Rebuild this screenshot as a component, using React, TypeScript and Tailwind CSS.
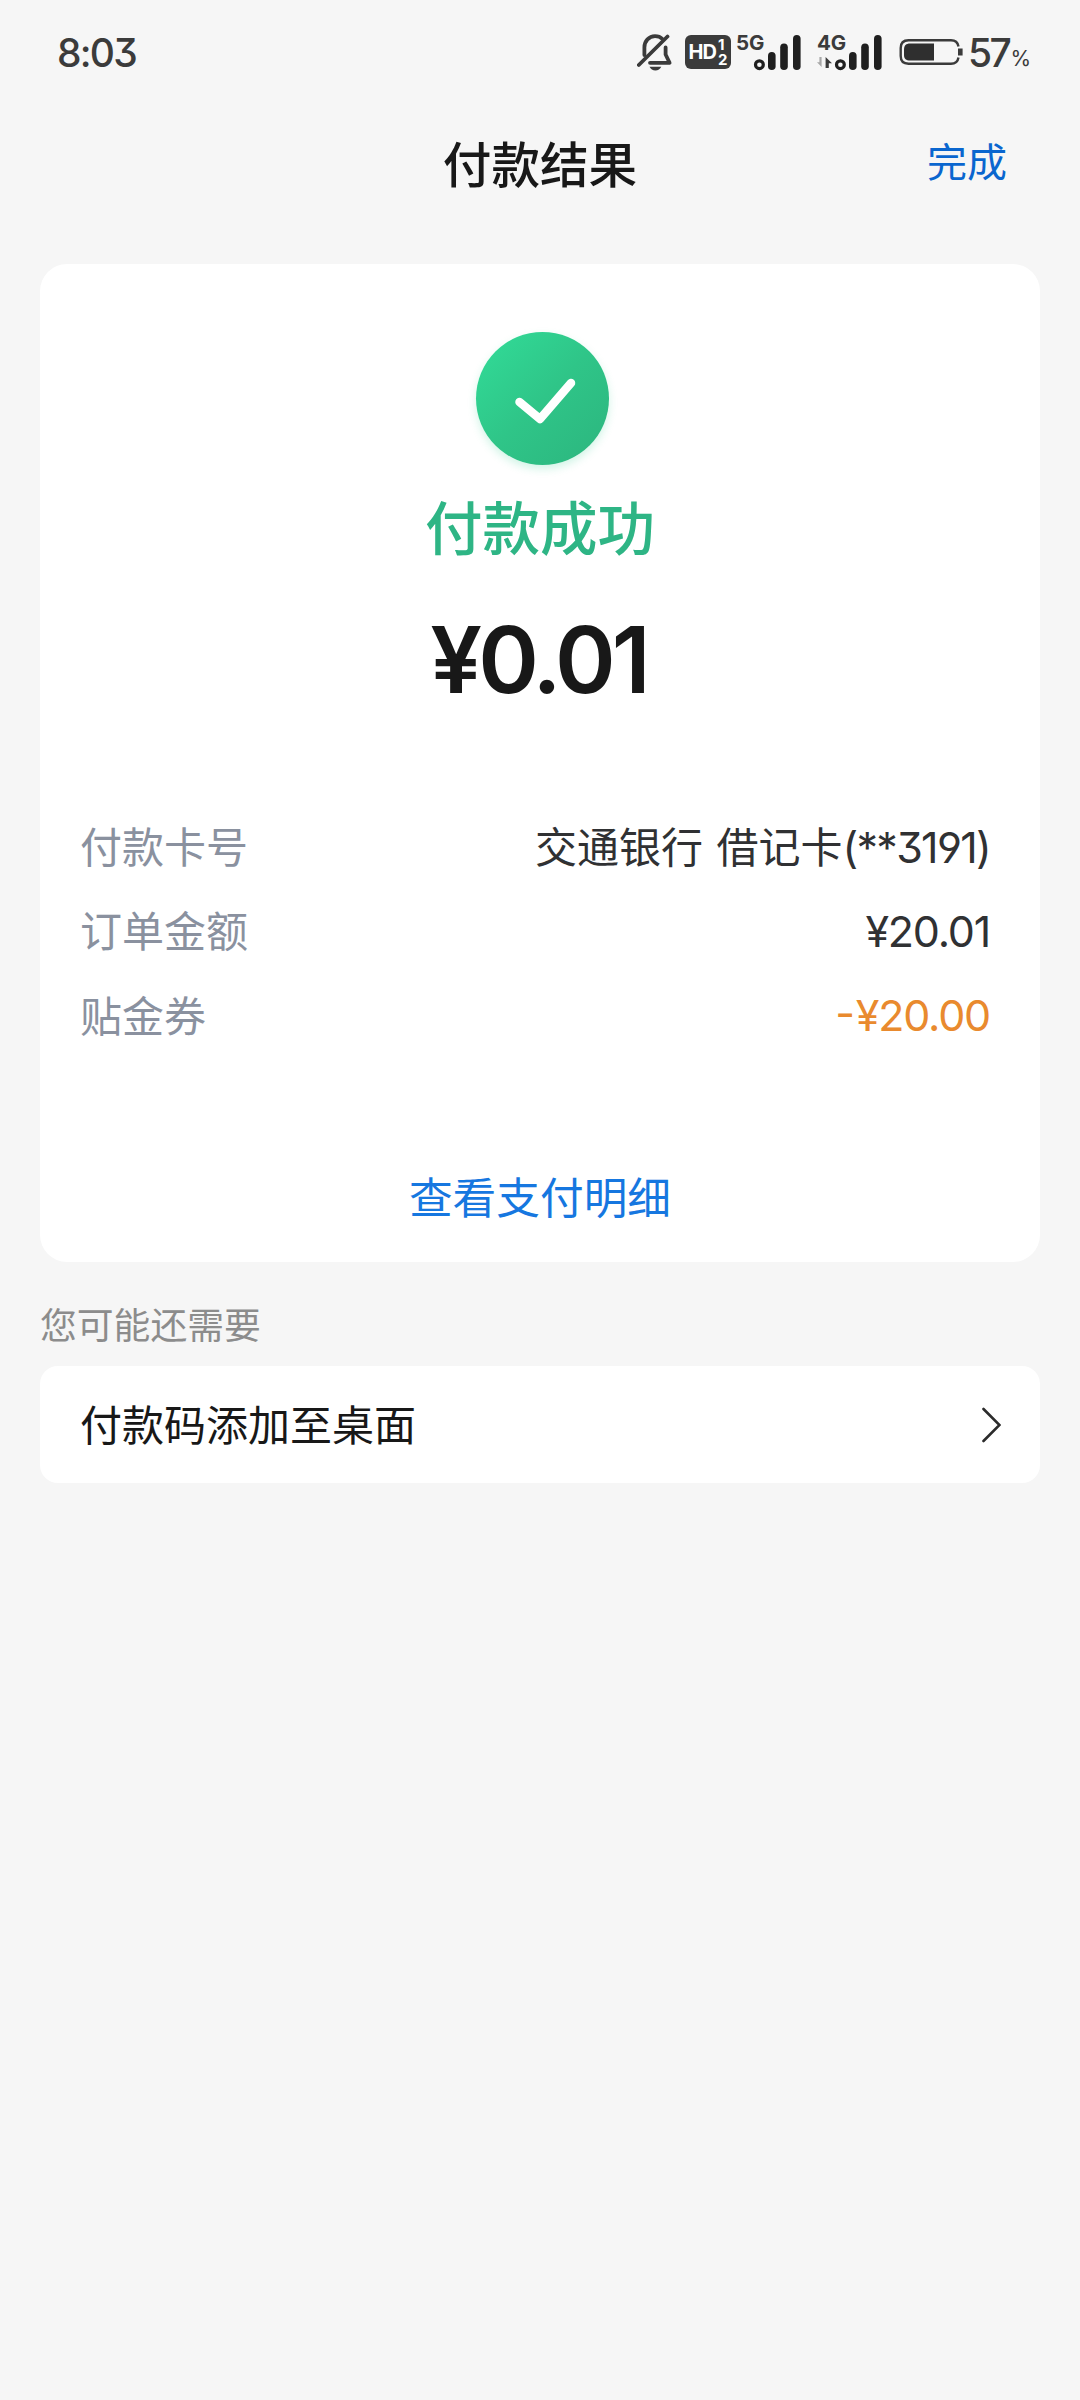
import { ReactNode } from "react";

// ─── Fonts ────────────────────────────────────────────────────

const CJK = "font-['Noto_Sans_CJK_SC',sans-serif]";
const NUM =
  "font-['Inter','Noto_Sans_CJK_SC',sans-serif] [font-feature-settings:'cv09','cv04']";

// ─── Status bar ───────────────────────────────────────────────

function BellOffIcon() {
  return (
    <svg className="w-[36px] h-[40px]" viewBox="0 0 36 40" fill="none">
      <g stroke="#3b3b3b" strokeWidth="3.8" strokeLinecap="round">
        <path d="M7.4 23V15.5C7.4 9 12 4.2 18 4.2C21 4.2 23.6 5.2 25.4 7" />
        <path d="M28.6 15.5V22.5L32.6 30.8H13" strokeLinejoin="round" />
        <path d="M30.5 4.5L1.8 33" />
      </g>
      <path d="M12.5 34.8H24.3C23.2 37.2 21 38.5 18.4 38.5C15.8 38.5 13.6 37.2 12.5 34.8Z" fill="#3b3b3b" />
    </svg>
  );
}

function HdBadge() {
  return (
    <div className={`flex items-center justify-center gap-[2px] w-[46px] h-[34px] rounded-[6px] bg-[#3b3b3b] text-white font-bold ${NUM}`}>
      <span className="text-[20px] leading-[34px] tracking-[-1px]">HD</span>
      <span className="flex flex-col text-[15px] leading-[15px]">
        <span>1</span>
        <span>2</span>
      </span>
    </div>
  );
}

function Signal({ label, data }: { label: string; data?: boolean }) {
  return (
    <div className="relative w-[66px] h-[38px]">
      <svg className="w-[66px] h-[38px]" viewBox="0 0 66 38">
        {data && (
          <>
            <path d="M4.6 24V34L0 29.2H2.4V24Z" fill="#a8a8a8" />
            <path d="M8.6 35V24L15 30.2H11.8V35Z" fill="#3b3b3b" />
          </>
        )}
        <circle cx="23.4" cy="31.7" r="3.9" fill="none" stroke="#1f1f1f" strokeWidth="3.2" />
        <g fill="#1f1f1f">
          <rect x="32" y="19" width="7.6" height="18" rx="3.8" />
          <rect x="44.2" y="10.5" width="7.6" height="26.5" rx="3.8" />
          <rect x="57" y="2" width="7.6" height="35" rx="3.8" />
        </g>
      </svg>
      <span className={`absolute left-0 top-[-3px] text-[20.5px] leading-[25px] font-bold ${NUM}`}>{label}</span>
    </div>
  );
}

function BatteryIcon() {
  return (
    <svg className="w-[64px] h-[28px]" viewBox="0 0 64 28" fill="none">
      <path
        d="M59.5 8.5C58.8 4.5 56 2.3 52 2.3H9.5C4.5 2.3 1.7 5 1.7 10V18C1.7 23 4.5 25.7 9.5 25.7H52C56 25.7 58.8 23.5 59.5 19.5"
        stroke="#3b3b3b"
        strokeWidth="2.4"
      />
      <path d="M35 5.5H11C7 5.5 5 7.5 5 11.5V17C5 21 7 22.5 11 22.5H35Z" fill="#2f2f2f" />
      <rect x="59" y="10.5" width="4.6" height="7" fill="#3b3b3b" />
    </svg>
  );
}

function StatusBar() {
  return (
    <div className="flex h-[104px] pl-[57px] pr-[49px] items-center text-[#3b3b3b]">
      <span className={`pt-[2px] text-[39px] font-medium leading-[48px] tracking-[-1.8px] ${NUM}`}>8:03</span>
      <div className="flex items-center ml-auto">
        <BellOffIcon />
        <div className="ml-[12px]">
          <HdBadge />
        </div>
        <div className="flex ml-[5px] gap-[15px]">
          <Signal label="5G" />
          <Signal label="4G" data />
        </div>
        <div className="ml-[16px]">
          <BatteryIcon />
        </div>
        <div className={`flex items-end ml-[5px] pt-[2px] ${NUM}`}>
          <span className="text-[39px] leading-[48px] font-medium tracking-[-2.5px]">57</span>
          <span className="ml-px pb-[4px] text-[21px] leading-[28px]">%</span>
        </div>
      </div>
    </div>
  );
}

// ─── Header ───────────────────────────────────────────────────

function Header() {
  return (
    <header className={`grid grid-cols-[1fr_auto_1fr] items-center h-[116px] px-[73px] ${CJK}`}>
      <span />
      <h1 className="text-[48.6px] leading-[72px] font-medium text-[#181818]">付款结果</h1>
      <button className="justify-self-end pb-[5px] text-[40px] leading-[60px] text-[#0a66cf]">完成</button>
    </header>
  );
}

// ─── Result card ──────────────────────────────────────────────

function SuccessIcon() {
  return (
    <div className="ml-[4px] w-[133px] h-[133px] rounded-full bg-linear-to-br from-[#31d895] from-10% via-[#2fc588] via-50% to-[#2cb57e] shadow-[0_4px_8px_rgba(45,205,140,0.22)]">
      <svg viewBox="0 0 133 133" fill="none">
        <path
          d="M43.5 70L64 87L95 51"
          stroke="#fff"
          strokeWidth="8.5"
          strokeLinecap="round"
          strokeLinejoin="round"
        />
      </svg>
    </div>
  );
}

function DetailRow({
  label,
  children,
  accent,
}: {
  label: string;
  children: ReactNode;
  accent?: boolean;
}) {
  return (
    <div className="flex items-center justify-between h-[84.5px]">
      <span className={`text-[42px] leading-[60px] pb-[3px] text-[#8a919f] ${CJK}`}>{label}</span>
      <span
        className={`text-[43px] leading-[60px] tracking-[-1.2px] ${NUM} ${
          accent ? "text-[#e98a2e]" : "text-[#303133]"
        }`}
      >
        {children}
      </span>
    </div>
  );
}

function ResultCard() {
  return (
    <section className="flex flex-col items-center h-[998px] mx-[40px] pt-[68px] rounded-[27px] bg-white">
      <SuccessIcon />
      <p className={`mt-[16px] text-[57.5px] leading-[88px] font-medium text-[#2eb585] ${CJK}`}>付款成功</p>
      <p className={`mt-[31px] mr-[3px] text-[92px] leading-[120px] font-semibold tracking-[-4px] text-[#181818] ${NUM}`}>
        ¥0.01
      </p>
      <div className="w-full mt-[84px] pl-[40px] pr-[50px]">
        <DetailRow label="付款卡号">
          <span className={`text-[42px] tracking-normal [word-spacing:4px] ${CJK}`}>交通银行 借记卡</span>
          <span className="tracking-[-1.7px]">(**3191)</span>
        </DetailRow>
        <DetailRow label="订单金额">¥20.01</DetailRow>
        <DetailRow label="贴金券" accent>
          <span className="[font-feature-settings:'case'] mr-[2px]">-</span>
          ¥20.00
        </DetailRow>
      </div>
      <button className={`mt-[105px] text-[43.7px] leading-[64px] text-[#1677e0] ${CJK}`}>查看支付明细</button>
    </section>
  );
}

// ─── Suggestions ──────────────────────────────────────────────

function Suggestions() {
  return (
    <section className={`mx-[40px] ${CJK}`}>
      <h2 className="pt-[33px] h-[104px] text-[36.8px] leading-[56px] text-[#8c8c8c]">您可能还需要</h2>
      <div className="flex items-center justify-between h-[117px] pl-[40px] pr-[39px] rounded-[18px] bg-white">
        <span className="pb-[4px] text-[42px] leading-[60px] text-[#181818]">付款码添加至桌面</span>
        <svg className="w-[20px] h-[36px]" viewBox="0 0 20 36" fill="none">
          <path d="M2.5 2L18.5 18L2.5 34" stroke="#2b2b2b" strokeWidth="2.6" strokeLinecap="round" />
        </svg>
      </div>
    </section>
  );
}

export default function App() {
  return (
    <main className="w-[1080px] h-[2400px] overflow-hidden bg-[#f6f6f6]">
      <StatusBar />
      <Header />
      <div className="h-[44px]" />
      <ResultCard />
      <Suggestions />
    </main>
  );
}
